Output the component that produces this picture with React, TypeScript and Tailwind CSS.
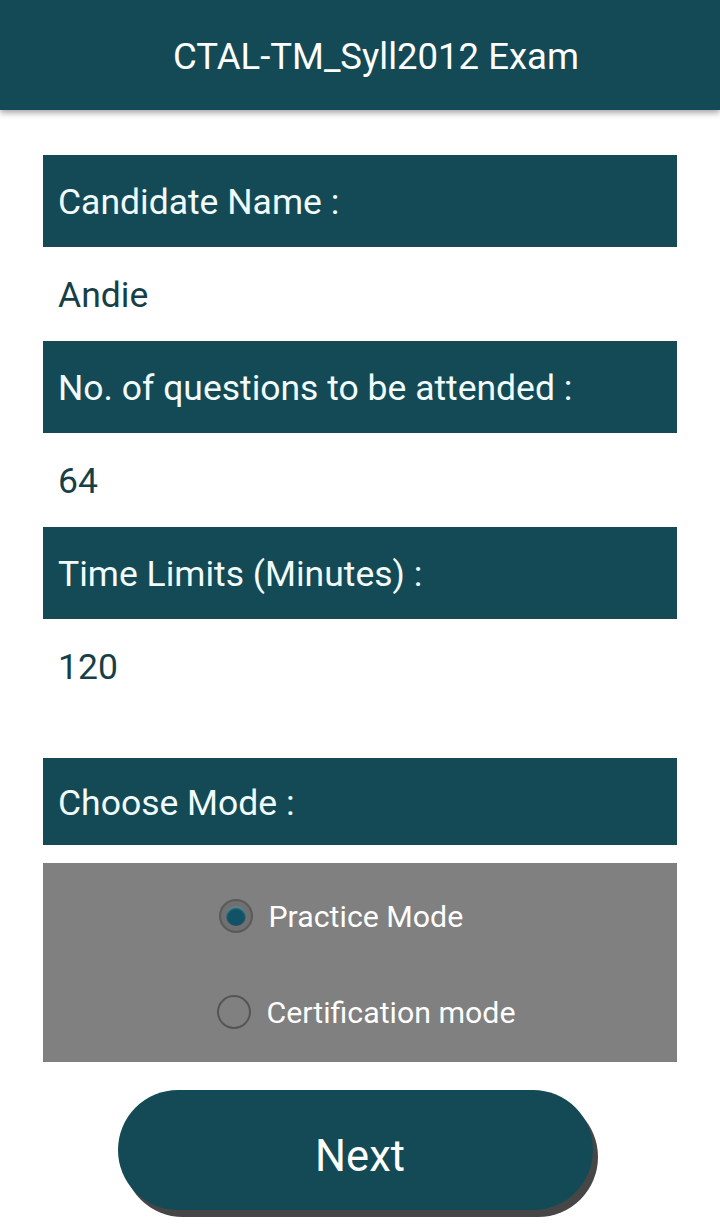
export default function App() {
  const font = { fontFamily: 'Roboto, "Noto Sans", sans-serif' };
  return (
    <div className="min-h-screen bg-white" style={font}>
      {/* Toolbar */}
      <header className="h-[110px] bg-[#134a55] flex items-center justify-center pt-[4px] shadow-[0_3px_6px_rgba(0,0,0,0.35)]">
        <h1 className="text-[36.5px] text-white pl-[32px]">CTAL-TM_Syll2012 Exam</h1>
      </header>

      <main className="px-[43px] pt-[45px] w-[720px]">
        <Label text="Candidate Name :" />
        <Value text="Andie" />
        <Label text="No. of questions to be attended :" />
        <Value text="64" />
        <Label text="Time Limits (Minutes) :" />
        <Value text="120" />

        <div className="mt-[45px] h-[87px] bg-[#134a55] flex items-center px-[15px] pt-[4px] text-[35.5px] text-[#f2fbfb]">
          Choose Mode :
        </div>

        {/* Mode picker */}
        <div className="mt-[18px] h-[199px] bg-[#808080] flex justify-center pl-[13px]">
          <div className="flex flex-col items-start pt-[18px]">
            <label className="flex items-center gap-[15px] h-[70px] pl-[2px]">
              <span className="w-[34px] h-[34px] rounded-full border-2 border-[#5a5a5a] bg-[#707070] flex items-center justify-center">
                <span className="w-[20px] h-[20px] rounded-full bg-[#125266] shadow-[inset_0_2px_2px_rgba(255,255,255,0.35)]" />
              </span>
              <span className="text-[30.3px] text-white pt-[1px]">Practice Mode</span>
            </label>
            <label className="flex items-center gap-[15px] h-[70px] mt-[26px]">
              <span className="w-[34px] h-[34px] rounded-full border-2 border-[#555]" />
              <span className="text-[30.3px] text-white pt-[1px]">Certification mode</span>
            </label>
          </div>
        </div>

        <div className="flex justify-center pt-[28px] pr-[9px]">
          <button className="w-[475px] h-[120px] rounded-full bg-[#134a55] text-white text-[43.5px] pt-[14px] pl-[9px] shadow-[5px_7px_0_#464646]">
            Next
          </button>
        </div>
      </main>
    </div>
  );
}

function Label({ text }: { text: string }) {
  return (
    <div className="h-[92px] bg-[#134a55] flex items-center px-[15px] pt-[4px] text-[35.5px] text-[#f2fbfb]">
      {text}
    </div>
  );
}

function Value({ text }: { text: string }) {
  return (
    <div className="h-[94px] flex items-center px-[15px] pt-[4px] text-[35.5px] text-[#163f47]">
      {text}
    </div>
  );
}
